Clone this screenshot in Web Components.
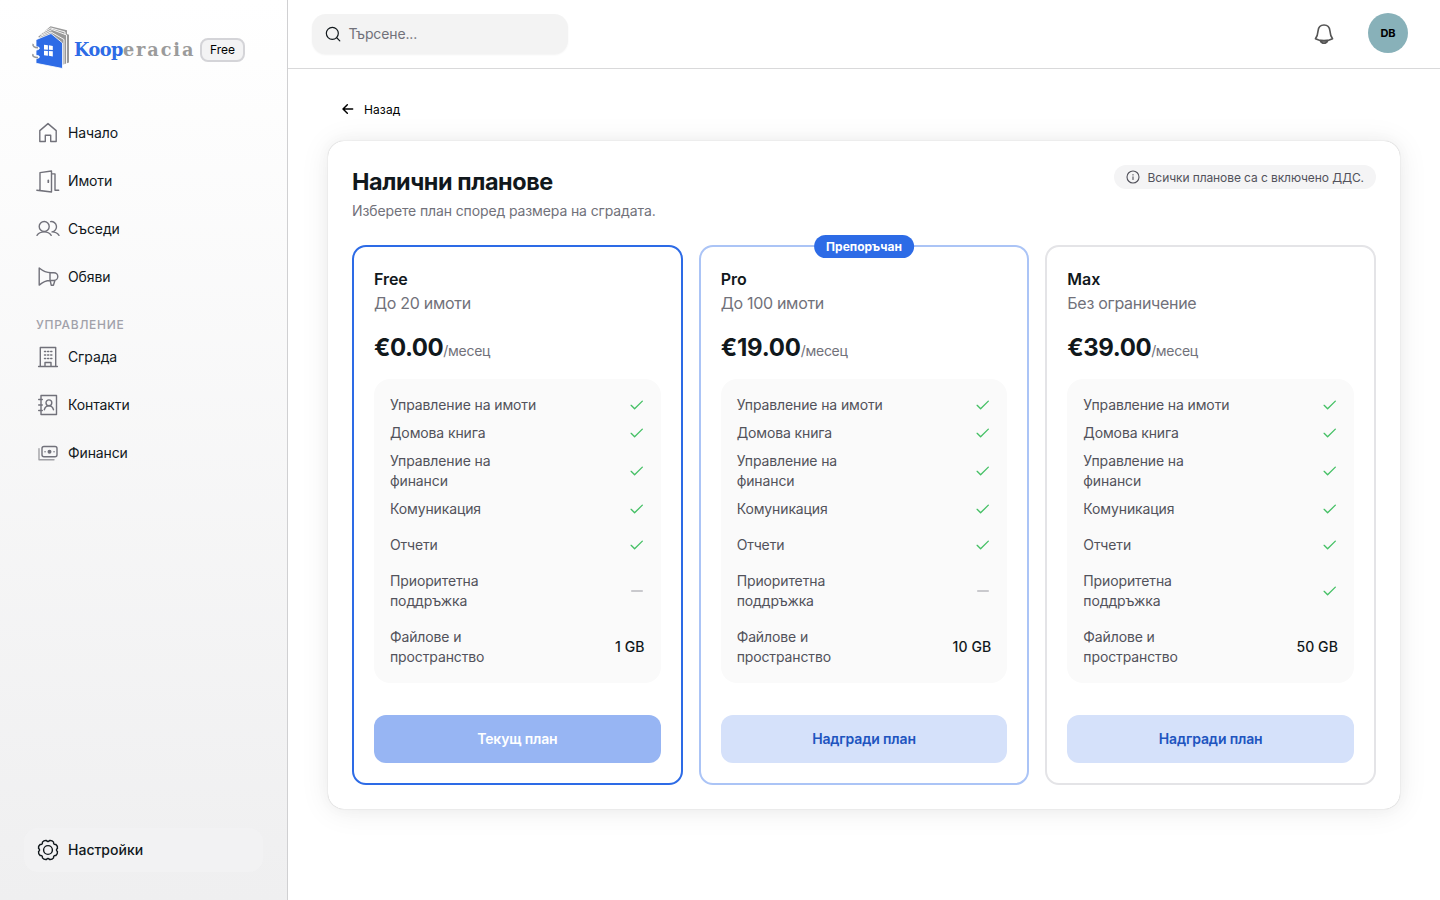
<!DOCTYPE html>
<html lang="bg">
<head>
<meta charset="utf-8">
<title>Kooperacia</title>
<style>
    body {
        margin: 0;
        font-family: Inter, "Liberation Sans", sans-serif;
        font-size: 14px;
        line-height: 20px;
        letter-spacing: -0.12px;
        color: #11181c;
        background: #fff;
    }
</style>
</head>
<body>
<x-shell>
    <x-sidebar slot="sidebar">
        <x-logo slot="brand" badge="Free"></x-logo>
        <x-nav-item icon="home">Начало</x-nav-item>
        <x-nav-item icon="door">Имоти</x-nav-item>
        <x-nav-item icon="users">Съседи</x-nav-item>
        <x-nav-item icon="megaphone">Обяви</x-nav-item>
        <x-nav-label>Управление</x-nav-label>
        <x-nav-item icon="building">Сграда</x-nav-item>
        <x-nav-item icon="contacts">Контакти</x-nav-item>
        <x-nav-item icon="cash">Финанси</x-nav-item>
        <x-nav-item slot="footer" icon="gear" active>Настройки</x-nav-item>
    </x-sidebar>
    <x-topbar slot="top" placeholder="Търсене..." initials="DB"></x-topbar>
    <x-back-link>Назад</x-back-link>
    <x-plans-panel heading="Налични планове" note="Всички планове са с включено ДДС.">
        <span slot="subtitle">Изберете план според размера на сградата.</span>
        <x-plan-card current name="Free" limit="До 20 имоти" price="€0.00" storage="1 GB" action="Текущ план"></x-plan-card>
        <x-plan-card recommended="Препоръчан" name="Pro" limit="До 100 имоти" price="€19.00" storage="10 GB" action="Надгради план"></x-plan-card>
        <x-plan-card support name="Max" limit="Без ограничение" price="€39.00" storage="50 GB" action="Надгради план"></x-plan-card>
    </x-plans-panel>
</x-shell>

<script>
const ICONS = {
    home: '<path d="M3.8 9.6 12 2.6l8.200 7v10.900h-5.500v-6.200H9.300v6.200H3.800z"/>',
    door: '<path d="M4 20.7V3.6L15.5 2v21L4 21.5M.8 21.2 15.500 23M15.500 4.900h3.500v16.400h3.700"/><path d="M12.300 11.400v1.800" stroke-width="1.700"/>',
    users: '<circle cx="8.200" cy="9.500" r="5"/><path d="M1 18.300C2.500 16.100 5 14.900 8.200 14.900s5.500 1.200 7 3.400M14.600 4.600a5 5 0 1 1 1.400 10.300c3.200 0 5.500 1.200 7 3.400"/>',
    megaphone: '<path d="M3.200 3c3.700 3 7.300 4.700 11.800 4.700h2.900a3.800 3.800 0 0 1 0 7.800H14c-4 0-7.400 1.700-10.800 4.600zM14 7.700v7.800M14.200 15.500l1 4.700h2.200l1.500-4.700"/>',
    building: '<path d="M4.300 2.500h15.400v19H4.300zM2.600 21.500h18.800M9 21.300V17.500h6v3.800"/><path d="M8.500 6.500h1.200M11.600 6.500h1.200M14.700 6.500h1.200M8.500 10h1.200M11.600 10h1.200M14.700 10h1.200M8.500 13.500h1.200M11.600 13.500h1.200M14.700 13.500h1.200"/>',
    contacts: '<path d="M5 2.500h15.500v19H5zM2.700 6.500h3.600M2.700 12h3.600M2.700 17.500h3.600"/><circle cx="12.900" cy="9.800" r="2.900"/><path d="M8.300 16.700c.7-2.500 2.300-4 4.600-4s3.900 1.500 4.600 4"/>',
    cash: '<rect x="6" y="5.500" width="15" height="10.300" rx="2"/><path d="M3 7.800v10.900h15" opacity=".65"/><circle cx="13.500" cy="10.700" r="1.300" fill="currentColor"/><path d="M9 10.700h.1M18 10.700h.1"/>',
    gear: '<path transform="rotate(22.500 12 12)" d="M21.350 9.840Q22.600 12 21.350 14.160Q18.840 14.830 20.140 17.090Q19.500 19.500 17.090 20.140Q14.830 18.840 14.160 21.350Q12 22.600 9.840 21.350Q9.170 18.840 6.910 20.140Q4.500 19.500 3.860 17.090Q5.160 14.830 2.650 14.160Q1.400 12 2.650 9.840Q5.160 9.170 3.860 6.910Q4.500 4.500 6.910 3.860Q9.170 5.160 9.840 2.650Q12 1.400 14.160 2.650Q14.830 5.160 17.090 3.860Q19.500 4.500 20.140 6.910Q18.840 9.170 21.350 9.840z"/><circle cx="12" cy="12" r="4.400"/>',
    search: '<circle cx="11" cy="11" r="9"/><path d="m17.600 17.600 4.600 4.600"/>',
    bell: '<path d="M12 2.200c-4 0-6.200 2.900-6.500 6.500-.3 4-1 6-2.800 8.500 2.600 1.500 5.800 2.200 9.300 2.200s6.700-.7 9.300-2.200c-1.800-2.500-2.500-4.500-2.800-8.500C18.200 5.100 16 2.200 12 2.200z"/><path fill="currentColor" fill-opacity=".5" d="M8 19.200c.8 1.900 2.200 2.900 4 2.900s3.200-1 4-2.900z"/>',
    back: '<path d="M19 12H5M11 5.500 4.500 12l6.500 6.500"/>',
    info: '<circle cx="12" cy="12" r="10.300"/><path d="M12 11.500v4.700M12 7.800v.6"/>',
    check: '<path d="m3.200 12.500 5.200 5.200L20 6.200"/>',
    minus: '<path d="M4 12h16"/>'
};

class Icon extends HTMLElement {
    connectedCallback() {
        const width = this.getAttribute('stroke') || 1.4;

        this.attachShadow({mode: 'open'}).innerHTML = `
            <style>
                :host {
                    display: block;
                    flex: none;
                    width: 24px;
                    height: 24px;
                }

                svg {
                    display: block;
                    width: 100%;
                    height: 100%;
                }
            </style>
            <svg viewBox="0 0 24 24" fill="none" stroke="currentColor" stroke-width="${width}"
                stroke-linecap="round" stroke-linejoin="round">${ICONS[this.getAttribute('name')]}</svg>
        `;
    }
}

class Shell extends HTMLElement {
    connectedCallback() {
        this.attachShadow({mode: 'open'}).innerHTML = `
            <style>
                :host {
                    display: grid;
                    grid-template-columns: 288px 1fr;
                    height: 100vh;
                    overflow: hidden;
                }

                .main {
                    display: flex;
                    flex-direction: column;
                    min-width: 0;
                }

                .content {
                    flex: 1;
                    padding: 24px 40px;
                }
            </style>
            <slot name="sidebar"></slot>
            <div class="main">
                <slot name="top"></slot>
                <div class="content"><slot></slot></div>
            </div>
        `;
    }
}

class Sidebar extends HTMLElement {
    connectedCallback() {
        this.attachShadow({mode: 'open'}).innerHTML = `
            <style>
                :host {
                    display: flex;
                    flex-direction: column;
                    box-sizing: border-box;
                    padding: 24px 24px 28px;
                    border-right: 1px solid #d0d0d2;
                    background: linear-gradient(#fff, #efeff0);
                }

                nav {
                    display: flex;
                    flex-direction: column;
                    gap: 4px;
                    flex: 1;
                    padding-top: 37px;
                }
            </style>
            <slot name="brand"></slot>
            <nav><slot></slot></nav>
            <slot name="footer"></slot>
        `;
    }
}

class Logo extends HTMLElement {
    connectedCallback() {
        this.attachShadow({mode: 'open'}).innerHTML = `
            <style>
                :host {
                    display: flex;
                    align-items: center;
                    height: 50px;
                    padding-left: 6px;
                }

                svg {
                    flex: none;
                    margin-bottom: 4px;
                }

                .name {
                    flex: none;
                    width: 126px;
                    margin: 2px 0 0 2px;
                    font: bold 17.7px/24px "DejaVu Serif", serif;
                    letter-spacing: 1.9px;
                    color: #9b9b9b;
                }

                .name b {
                    letter-spacing: -0.5px;
                    color: #2d6be6;
                }

                .badge {
                    box-sizing: border-box;
                    height: 24px;
                    margin-top: 1px;
                    padding: 0 8px;
                    border: 2px solid #d4d4d8;
                    border-radius: 8px;
                    background: #f3f3f4;
                    font-size: 12px;
                    line-height: 20px;
                    letter-spacing: 0;
                    color: #000;
                }
            </style>
            <svg width="42" height="46" viewBox="0 0 42 46">
                <path fill="#999" d="M8 13 20.500 2.300 37 6.300V10l2 .7V38.500l-7 2.500V20z"/>
                <g fill="none" stroke="#fff" stroke-width=".9">
                    <path d="M13 8.500 20.800 4 35 8v2.500M11 11l11-5.500L36.500 11v29M10 12.500 21 8l13 7.500V41"/>
                </g>
                <path fill="#2d6be6" stroke="#fff" stroke-width=".8" d="m6 15.700 15-6.200L32.500 19v25.500L6 39.300v-4.500l2.800-.9c1-.7.600-2-.4-2.200L6 31.300v-5l2.800-1c1-.7.600-2-.4-2.200L6 22.700z"/>
                <path fill="none" stroke="#999" stroke-width="1.500" d="M8 23.700c-3.500 0-5.800-1.600-4.800-3.800M8 33.500c-3.500.3-6-1.300-5-3.500"/>
                <path fill="#fff" d="m14 20.700 3.900.5v4.600l-3.900-.2zm4.900.6 3.900.6v4.200l-3.900-.3zM14 26.700l3.900.2v4.900l-3.900-.6zm4.900.3 3.900.3v5.100l-3.900-.6z"/>
            </svg>
            <span class="name"><b>Koop</b>eracia</span>
            <span class="badge">${this.getAttribute('badge')}</span>
        `;
    }
}

class NavItem extends HTMLElement {
    connectedCallback() {
        this.attachShadow({mode: 'open'}).innerHTML = `
            <style>
                :host {
                    display: flex;
                    align-items: center;
                    gap: 8px;
                    height: 44px;
                    padding: 0 12px;
                    border-radius: 14px;
                }

                x-icon {
                    color: #71717a;
                }

                :host([active]) {
                    font-weight: 500;
                    letter-spacing: 0;
                    background: rgba(244, 244, 245, 0.6);
                }

                :host([active]) x-icon {
                    color: #11181c;
                }
            </style>
            <x-icon name="${this.getAttribute('icon')}"></x-icon>
            <slot></slot>
        `;
    }
}

class NavLabel extends HTMLElement {
    connectedCallback() {
        this.attachShadow({mode: 'open'}).innerHTML = `
            <style>
                :host {
                    display: block;
                    margin: 14px 0 -2px;
                    padding-left: 12px;
                    font-size: 12px;
                    line-height: 16px;
                    letter-spacing: 0.7px;
                    font-weight: 500;
                    text-transform: uppercase;
                    color: #a1a1aa;
                }
            </style>
            <slot></slot>
        `;
    }
}

class Topbar extends HTMLElement {
    connectedCallback() {
        this.attachShadow({mode: 'open'}).innerHTML = `
            <style>
                :host {
                    display: flex;
                    align-items: center;
                    box-sizing: border-box;
                    height: 69px;
                    padding: 0 32px 0 24px;
                    border-bottom: 1px solid #d9d9da;
                }

                .search {
                    display: flex;
                    align-items: center;
                    gap: 7.5px;
                    box-sizing: border-box;
                    width: 256px;
                    height: 40px;
                    padding: 0 13px;
                    border-radius: 14px;
                    background: #f3f3f3;
                    letter-spacing: -0.12px;
                    color: #71717a;
                    box-shadow: 0 1px 2px rgba(0, 0, 0, 0.05);
                }

                .search x-icon {
                    width: 16px;
                    height: 16px;
                    color: #11181c;
                }

                .bell {
                    width: 22px;
                    height: 22px;
                    margin-left: auto;
                    color: #555;
                }

                .avatar {
                    display: grid;
                    place-items: center;
                    width: 40px;
                    height: 40px;
                    margin: 0 0 2px 33px;
                    border-radius: 50%;
                    background: #88b1b9;
                    font-size: 11px;
                    font-weight: 700;
                    color: #000;
                }
            </style>
            <div class="search"><x-icon name="search" stroke="1.800"></x-icon>${this.getAttribute('placeholder')}</div>
            <x-icon class="bell" name="bell" stroke="1.800"></x-icon>
            <div class="avatar">${this.getAttribute('initials')}</div>
        `;
    }
}

class BackLink extends HTMLElement {
    connectedCallback() {
        this.attachShadow({mode: 'open'}).innerHTML = `
            <style>
                :host {
                    display: flex;
                    align-items: center;
                    gap: 8px;
                    height: 32px;
                    margin-bottom: 16px;
                    padding-left: 12px;
                    font-size: 12px;
                    letter-spacing: 0.1px;
                    color: #000;
                }

                x-icon {
                    width: 16px;
                    height: 16px;
                }

                span {
                    padding-top: 2px;
                }
            </style>
            <x-icon name="back" stroke="2.200"></x-icon>
            <span><slot></slot></span>
        `;
    }
}

class PlansPanel extends HTMLElement {
    connectedCallback() {
        this.attachShadow({mode: 'open'}).innerHTML = `
            <style>
                :host {
                    display: block;
                    padding: 24px;
                    border-radius: 16px;
                    background: #fff;
                    box-shadow: 0 0 15px rgba(0, 0, 0, 0.03), 0 2px 30px rgba(0, 0, 0, 0.08), 0 0 1px rgba(0, 0, 0, 0.3);
                }

                header {
                    display: flex;
                    justify-content: space-between;
                    align-items: flex-start;
                    margin-bottom: 24px;
                }

                h1 {
                    margin: 0 0 3px;
                    padding-top: 1px;
                    font-size: 23.4px;
                    line-height: 32px;
                    font-weight: 700;
                    letter-spacing: -0.4px;
                }

                .subtitle {
                    color: #71717a;
                }

                .note {
                    display: flex;
                    align-items: center;
                    gap: 8px;
                    box-sizing: border-box;
                    height: 24px;
                    padding: 0 12px;
                    border-radius: 12px;
                    background: #f4f4f5;
                    font-size: 12px;
                    letter-spacing: -0.09px;
                    color: #52525b;
                }

                .note x-icon {
                    width: 14px;
                    height: 14px;
                }

                .note span {
                    padding-top: 2px;
                }

                .plans {
                    display: grid;
                    grid-template-columns: repeat(3, 1fr);
                    gap: 16px;
                }
            </style>
            <header>
                <div>
                    <h1>${this.getAttribute('heading')}</h1>
                    <div class="subtitle"><slot name="subtitle"></slot></div>
                </div>
                <div class="note"><x-icon name="info" stroke="1.900"></x-icon><span>${this.getAttribute('note')}</span></div>
            </header>
            <div class="plans"><slot></slot></div>
        `;
    }
}

class Feature extends HTMLElement {
    connectedCallback() {
        const value = this.getAttribute('value');

        this.attachShadow({mode: 'open'}).innerHTML = `
            <style>
                :host {
                    display: flex;
                    align-items: center;
                    justify-content: space-between;
                    color: #52525b;
                }

                x-icon {
                    width: 16px;
                    height: 16px;
                }

                .check {
                    color: #45c065;
                }

                .minus {
                    color: #b9b9bf;
                }

                b {
                    font-weight: 500;
                    letter-spacing: 0.1px;
                    color: #11181c;
                }
            </style>
            <span><slot></slot></span>
            ${value in ICONS ? `<x-icon class="${value}" name="${value}" stroke="2"></x-icon>` : `<b>${value}</b>`}
        `;
    }
}

class PlanCard extends HTMLElement {
    connectedCallback() {
        const badge = this.getAttribute('recommended');

        this.attachShadow({mode: 'open'}).innerHTML = `
            <style>
                :host {
                    display: flex;
                    flex-direction: column;
                    gap: 16px;
                    position: relative;
                    padding: 20px;
                    border: 2px solid #e4e4e7;
                    border-radius: 14px;
                }

                :host([recommended]) {
                    border-color: #abc4f6;
                }

                :host([current]) {
                    border-color: #2d6be6;
                }

                .badge {
                    position: absolute;
                    top: -12px;
                    left: 50%;
                    transform: translateX(-50%);
                    padding: 4px 12px 3px;
                    border-radius: 12px;
                    background: #2d6be6;
                    font-size: 12px;
                    line-height: 16px;
                    font-weight: 700;
                    letter-spacing: 0;
                    white-space: nowrap;
                    color: #fff;
                }

                .title {
                    font-size: 16px;
                    line-height: 24px;
                    letter-spacing: -0.3px;
                    color: #71717a;
                }

                .title b {
                    display: block;
                    font-weight: 600;
                    letter-spacing: -0.05px;
                    color: #11181c;
                }

                .price {
                    height: 31px;
                    padding-top: 1px;
                    line-height: 32px;
                    letter-spacing: -0.3px;
                    color: #71717a;
                }

                .price b {
                    font-size: 24px;
                    font-weight: 700;
                    letter-spacing: -0.45px;
                    color: #11181c;
                }

                :host([recommended]) .price b {
                    letter-spacing: -0.2px;
                }

                .features {
                    display: flex;
                    flex-direction: column;
                    gap: 8px;
                    padding: 16px;
                    border-radius: 16px;
                    background: #fafafa;
                }

                .spaced {
                    margin-top: 8px;
                }

                .action {
                    height: 48px;
                    margin-top: 16px;
                    border: 0;
                    border-radius: 12px;
                    background: #d5e1fa;
                    font: 600 14px/20px Inter, "Liberation Sans", sans-serif;
                    letter-spacing: -0.15px;
                    color: #2054bf;
                }

                :host([current]) .action {
                    background: #97b5f3;
                    color: #fff;
                }
            </style>
            ${badge ? `<span class="badge">${badge}</span>` : ''}
            <div class="title"><b>${this.getAttribute('name')}</b>${this.getAttribute('limit')}</div>
            <div class="price"><b>${this.getAttribute('price')}</b>/месец</div>
            <div class="features">
                <x-feature value="check">Управление на имоти</x-feature>
                <x-feature value="check">Домова книга</x-feature>
                <x-feature value="check">Управление на<br>финанси</x-feature>
                <x-feature value="check">Комуникация</x-feature>
                <x-feature class="spaced" value="check">Отчети</x-feature>
                <x-feature class="spaced" value="${this.hasAttribute('support') ? 'check' : 'minus'}">Приоритетна<br>поддръжка</x-feature>
                <x-feature class="spaced" value="${this.getAttribute('storage')}">Файлове и<br>пространство</x-feature>
            </div>
            <button class="action">${this.getAttribute('action')}</button>
        `;
    }
}

customElements.define('x-icon', Icon);
customElements.define('x-shell', Shell);
customElements.define('x-sidebar', Sidebar);
customElements.define('x-logo', Logo);
customElements.define('x-nav-item', NavItem);
customElements.define('x-nav-label', NavLabel);
customElements.define('x-topbar', Topbar);
customElements.define('x-back-link', BackLink);
customElements.define('x-plans-panel', PlansPanel);
customElements.define('x-feature', Feature);
customElements.define('x-plan-card', PlanCard);
</script>
</body>
</html>
